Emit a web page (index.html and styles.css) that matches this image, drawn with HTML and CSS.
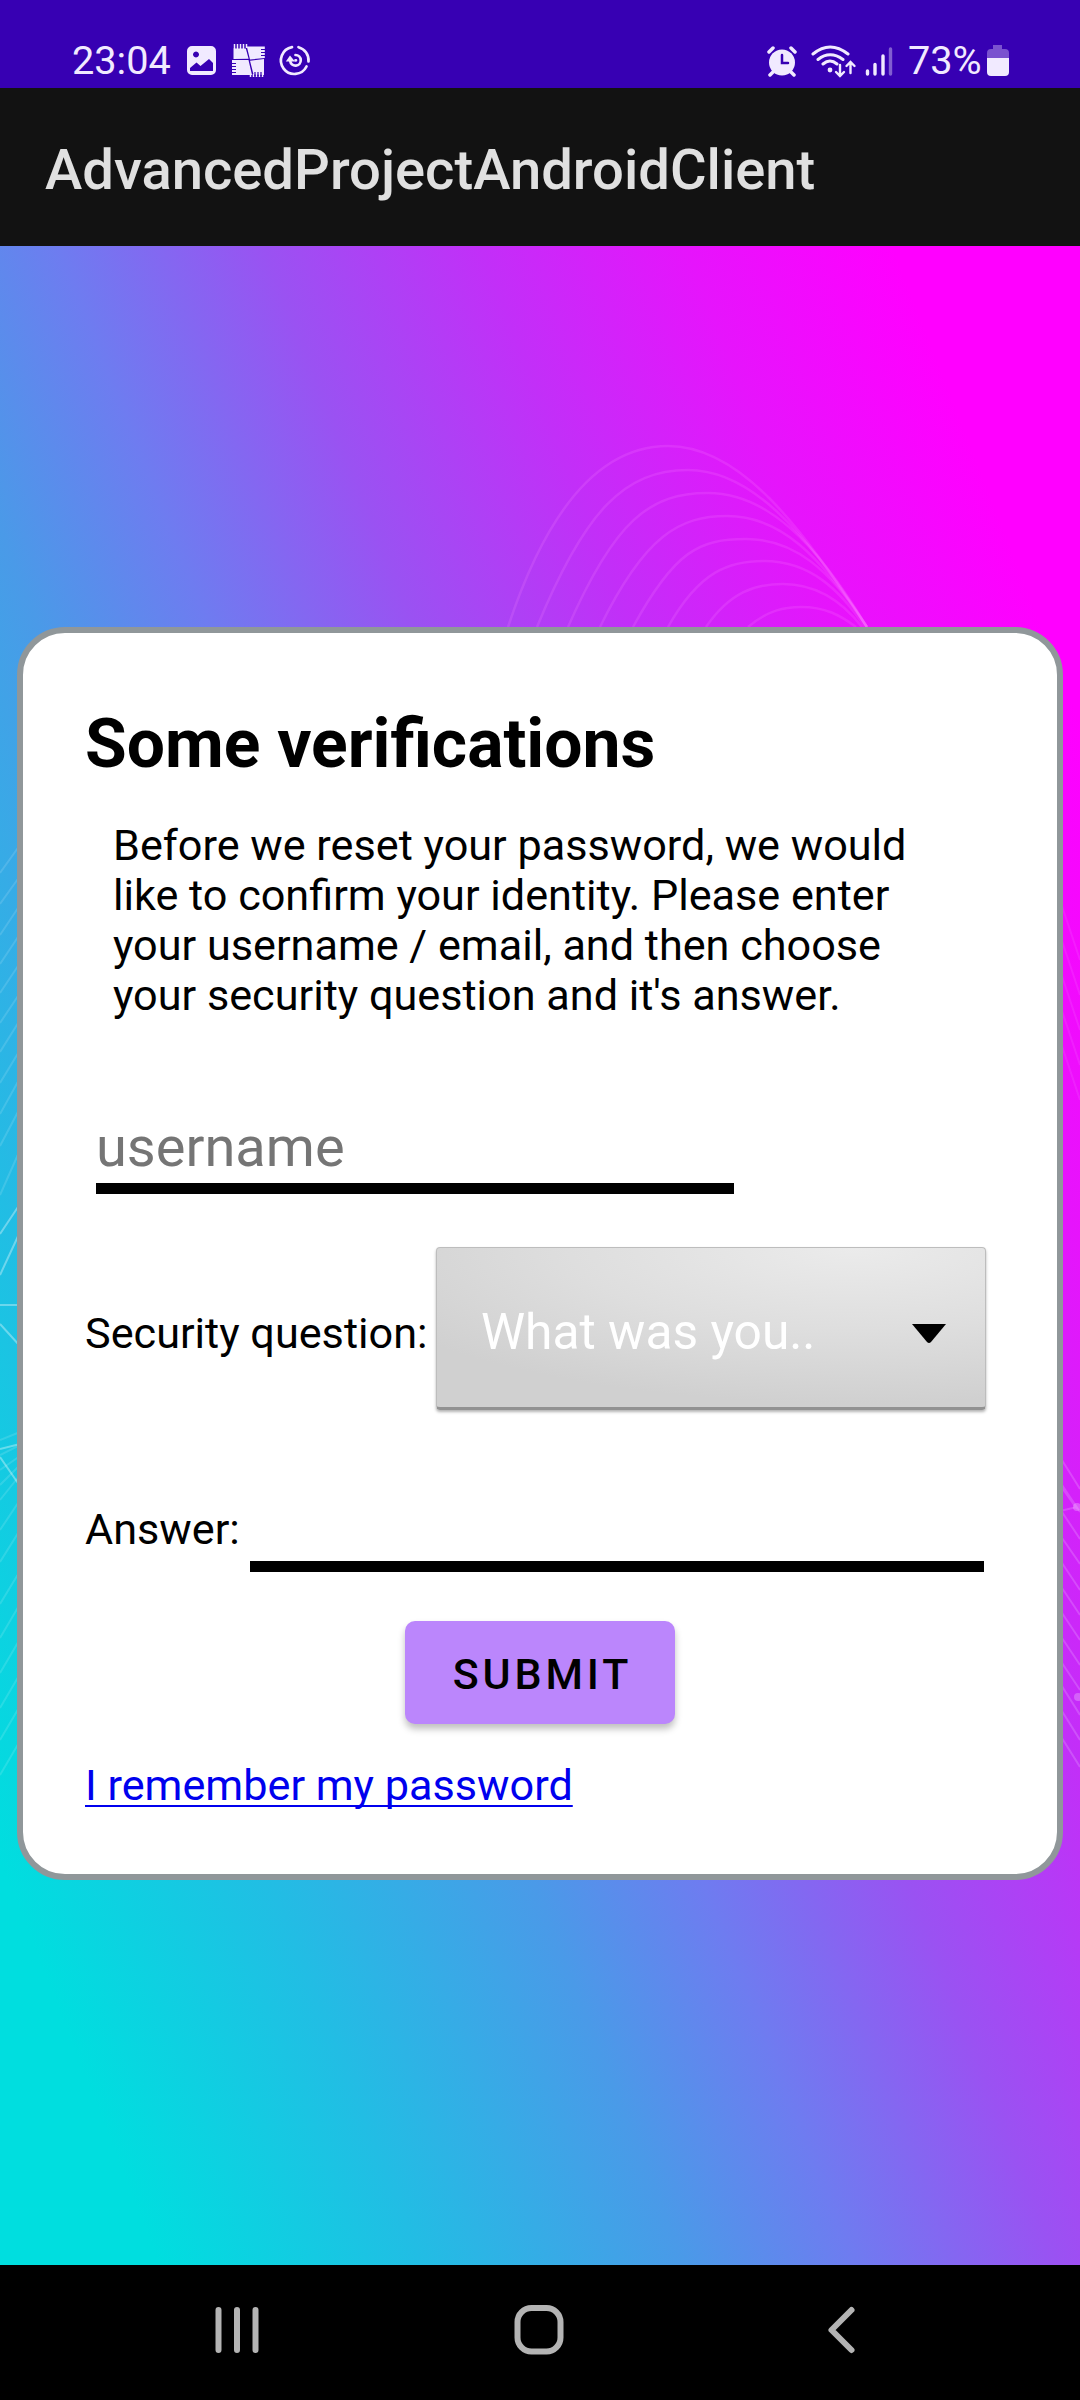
FILE: index.html
```html
<!DOCTYPE html>
<html lang="en">
<head>
<meta charset="utf-8">
<title>AdvancedProjectAndroidClient</title>
<link rel="stylesheet" href="styles.css">
</head>
<body>
<div class="status">
  <span class="clock">23:04</span>
  <svg class="ic-left" width="126" height="36" viewBox="0 0 126 36">
    <path fill="#f1eaff" fill-rule="evenodd" d="M6 2h19a5 5 0 0 1 5 5v19a5 5 0 0 1-5 5H6a5 5 0 0 1-5-5V7a5 5 0 0 1 5-5zM10 7.500a3 3 0 1 0 .01 0zM4 27h23V19l-4-4-8.500 7-4-3.500L4 24z"/>
    <path fill="#f1eaff" d="M47.500 4.500h12.300l2.800 10.300-15.100.200zM60.800 2.500h18v11.500l-14.800 1.500zM46 16h16.500l3.500 15H46zM64 16.800l14-1.800V31l-10.500-.500z"/>
    <path stroke="#f1eaff" stroke-width="1.500" d="M48.500 0v5M51.500 0v5M54.500 0v5M57.500 0v5M60.500 0v4M76.500 30v3M73.500 30v3M70.500 30v3M67.500 30v3M64.500 30v3"/>
    <path stroke="#3700b3" stroke-width="1.200" d="M46 19.500h4M46 22.500h4M46 25.500h4M46 28.500h4M75 5.500h4M75 8.500h4M75 11.500h4M69 28v4M72 28v4M75 28v4"/>
    <g fill="none" stroke="#f1eaff" stroke-width="2.700" stroke-linecap="round"><path d="M106 3.200A13.500 13.500 0 1 0 120.500 22.500M112.500 3.200A13.500 13.500 0 0 1 122.500 17.500"/><path d="M109.500 11a5.300 5.300 0 1 1-5.300 6M109.500 16.300h.500"/></g>
    <path fill="#f1eaff" d="M99.800 17.500l4.200-6 5 6z"/>
  </svg>
  <svg class="ic-right" width="132" height="36" viewBox="0 0 132 36">
    <g stroke="#f1eaff" stroke-linecap="round" fill="none">
      <circle cx="15" cy="18.500" r="13" fill="#f1eaff" stroke="none"/>
      <path stroke-width="3.500" d="M2 8l4-4M24 4l4 4M6 28l-3 3M24 28l3 3"/>
      <path stroke="#3700b3" stroke-width="2.500" d="M15 11v8h6"/>
      <g stroke-width="3"><path d="M46 10q17-14 35 0M51 15.500q12-9.500 25 0M56 20q7-6 14 0"/></g>
      <circle cx="63" cy="26" r="2.400" fill="#f1eaff" stroke="none"/>
      <path stroke-width="2.400" d="M73 21v11M69 28l4 4 4-4M83.500 29V18.500M79.500 22l4-4 4 4"/>
      <path stroke-width="3.400" d="M100.500 27v3M108 20.500v9.500M116 12v18"/><path stroke-width="3.400" stroke-opacity=".4" d="M123.500 5v25"/>
    </g>
  </svg>
  <span class="battery-text">73%</span>
  <svg class="ic-battery" width="22" height="34" viewBox="0 0 22 34"><path fill="#7a52cf" d="M6 1h9v4h3a4 4 0 0 1 4 4v5H0V9a4 4 0 0 1 4-4h2z"/><path fill="#f1eaff" d="M0 14h22v14a4 4 0 0 1-4 4H4a4 4 0 0 1-4-4z"/></svg>
</div>
<header class="appbar">AdvancedProjectAndroidClient</header>
<main class="stage">
  <svg class="waves" width="1080" height="2019" viewBox="0 246 1080 2019" fill="none" stroke="#ff8cff">
    <g stroke-opacity=".17" stroke-width="2.500">
      <path d="M508 627C550 500 605 446 668 446C740 446 800 525 867 627"/>
      <path d="M537 627C585 510 625 470 688 470C750 470 805 530 867 627"/>
      <path d="M568 627C615 520 650 493 708 493C765 493 815 540 867 627"/>
      <path d="M600 627C645 535 680 516 727 516C780 516 820 555 867 627"/>
      <path d="M633 627C675 550 700 539 746 539C795 539 830 570 867 627"/>
      <path d="M668 627C700 570 730 561 764 561C810 561 840 590 865 627"/>
      <path d="M706 627C730 592 755 584 783 584C820 584 845 605 862 627"/>
      <path d="M748 627C768 610 785 607 801 607C825 607 840 615 856 627"/>
    </g>
    <g stroke="#fff" stroke-opacity=".13" stroke-width="2"><path d="M0 873l20-28M0 904l20-28M0 935l20-30M0 964l20-30M0 993l20-30M0 1023l20-30M0 1052l20-32M0 1083l20-33M0 1114l20-36M0 1146l20-38M0 1195l20-45M0 1530l20-30M0 1562l20-32M0 1604l20-33M0 1638l20-34M0 1673l20-34M0 1708l20-34M0 1740l20-34M0 1775l20-34M0 1500l20-25M0 1485l20-20M0 1470l20-14M0 1455l20-10M0 1440l20-8"/></g>
    <g stroke="#fff" stroke-opacity=".35" stroke-width="2"><path d="M0 1234l20-30M0 1275l20-43M0 1305h20M0 1324l20 22M0 1449l20-5M0 1457l20 29"/></g>
    <g stroke="#fff" stroke-opacity=".17" stroke-width="2"><path d="M1060 1457l20 32M1060 1482l20 30M1060 1509l20 30M1060 1535l20 29M1060 1560l20 30M1060 1585l20 30M1060 1610l20 30M1060 1635l20 30M1060 1660l20 30M1060 1683l20 32M1060 1708l20 32M1060 1735l20 32M1060 1485l17 24M1060 1511l17-4"/></g>
    <g stroke="#fff" stroke-opacity=".08" stroke-width="2"><path d="M1060 900l20 60M1060 935l20 60M1060 970l20 60M1060 1005l20 60M1060 1040l20 60"/></g>
    <g fill="#fff" fill-opacity=".25" stroke="none"><circle cx="1077" cy="1507" r="4"/><circle cx="1078" cy="1697" r="4"/></g>
  </svg>
  <section class="card">
    <h1 class="title">Some verifications</h1>
    <p class="intro">Before we reset your password, we would<br>like to confirm your identity. Please enter<br>your username / email, and then choose<br>your security question and it's answer.</p>
    <div class="username">username</div>
    <div class="question">
      <span class="label">Security question:</span>
      <div class="spinner"><span>What was you..</span><svg width="34" height="20" viewBox="0 0 34 20"><path d="M0 0h34L19 18q-2 2-4 0z"/></svg></div>
    </div>
    <div class="answer"><span class="label">Answer:</span><div class="line"></div></div>
    <button class="submit">SUBMIT</button>
    <a class="link">I remember my password</a>
  </section>
</main>
<nav class="nav">
  <svg width="1080" height="135" viewBox="0 2265 1080 135" fill="none" stroke="#b4b4b4" stroke-linecap="round">
    <path stroke-width="6" d="M218.500 2310v40M237 2310v40M255.500 2310v40"/>
    <rect x="517.500" y="2308" width="43" height="43.500" rx="14" stroke-width="6"/>
    <path stroke-width="6" stroke-linejoin="round" d="M851.500 2310l-20 20 20 20"/>
  </svg>
</nav>
</body>
</html>
```
FILE: styles.css
```css
* { box-sizing: border-box; }
body { margin: 0; width: 1080px; height: 2400px; overflow: hidden; font-family: Roboto, sans-serif; color: #000; background: #000; display: flex; flex-direction: column; }
svg { display: block; flex: none; }
span { white-space: nowrap; }
.status { height: 88px; flex: none; background: #3700b3; display: flex; align-items: flex-start; padding: 0 71px 0 72px; color: #f1eaff; font-size: 39.700px; line-height: 47px; }
.clock { width: 114px; padding-top: 37px; }
.ic-left { margin-top: 44px; }
.ic-right { margin: 44px 10px 0 auto; }
.battery-text { width: 73px; padding-top: 37px; margin-left: -1px; margin-right: 1px; }
.ic-battery { margin: 44px 0 0 5px; }
.appbar { height: 158px; flex: none; background: #121212; color: #e0e0e0; font-size: 56.200px; font-weight: 500; line-height: 66px; padding: 49px 45px; }
.stage { height: 2019px; flex: none; position: relative; padding: 381px 17px 0; background: linear-gradient(68.5deg, #00dedf 8.5%, #22bde4 22.5%, #4a9ae8 36.5%, #6e7cf0 45.5%, #9a52f2 56.5%, #c22ff8 68%, #e614fc 79%, #ff00ff 90%); }
.waves { position: absolute; left: 0; top: 0; }
.card { position: relative; height: 1253px; background: #fff; border: 6px solid #90979a; border-radius: 48px; padding: 72px 73px 0 62px; display: flex; flex-direction: column; }
.title { margin: 0; font-size: 67.800px; line-height: 79px; font-weight: 700; }
.intro { margin: 37px 0 0 28px; font-size: 43.200px; line-height: 50.100px; white-space: nowrap; }
.username { margin: 68px 0 0 11px; width: 638px; height: 105px; border-bottom: 11px solid #000; color: #757575; font-size: 56px; line-height: 66px; padding-top: 25px; }
.question { display: flex; align-items: center; margin-top: 53px; height: 163px; }
.label { font-size: 43.200px; line-height: 50px; }
.question .label { width: 351px; flex: none; padding-top: 11px; }
.spinner { width: 550px; height: 163px; flex: none; display: flex; align-items: center; justify-content: space-between; padding: 8px 39px 0 44px; color: #fff; font-size: 49.700px; border-radius: 4px; border: 1px solid #bdbdbd; border-bottom: 3px solid #929292; box-shadow: 0 2px 3px rgba(0,0,0,.3); background: radial-gradient(ellipse 115% 115% at 76% 0, #ebebeb, #dedede 45%, #d0d0d0 85%); }
.spinner svg { margin-top: 4px; }
.answer { display: flex; align-items: flex-end; height: 90px; margin-top: 72px; }
.answer .label { width: 165px; margin-bottom: 17px; }
.line { width: 734px; height: 11px; background: #000; }
.submit { width: 270px; height: 103px; margin: 49px 0 0 320px; border: 0; border-radius: 10px; background: #bb86fc; color: #000; font: 500 42.900px/50px Roboto, sans-serif; letter-spacing: 3.900px; padding: 2px 0 0 5px; box-shadow: 0 5px 7px rgba(0,0,0,.25); }
.link { margin-top: 37px; font-size: 43.200px; line-height: 50px; color: #0000ee; text-decoration: underline; text-decoration-thickness: 2px; text-underline-offset: 5px; text-decoration-skip-ink: none; }
.nav { height: 135px; flex: none; background: #000; }
```
